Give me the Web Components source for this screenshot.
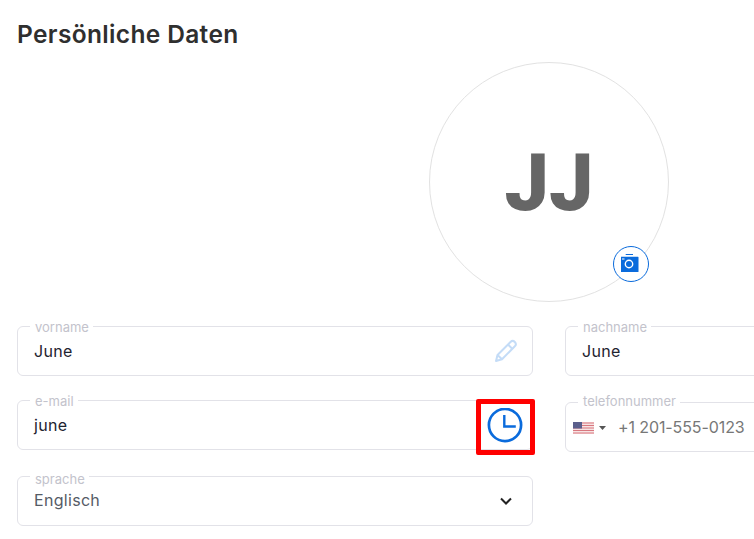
<!DOCTYPE html>
<html lang="de">
<head>
<meta charset="utf-8">
<title>Persönliche Daten</title>
<style>
html, body { margin: 0; height: 100%; overflow: hidden; background: #fff; }
body { font-family: Inter, "Liberation Sans", sans-serif; }
</style>
</head>
<body>
<profile-page>
  <user-avatar slot="avatar" initials="JJ"></user-avatar>
  <form-field label="vorname" value="June" style="grid-area: a">
    <svg slot="end" style="margin:-2px -2px 0 0" width="24" height="24" viewBox="0 0 24 24" fill="none" stroke="#c4dcf7" stroke-width="2" stroke-linejoin="round"><path d="M2 22l1.5-6L16.500 3a2.900 2.900 0 0 1 4.300 4.300L8 20.300z"/><path d="M14 5.500l4.500 4.500M3.500 16L8 20.300"/></svg>
  </form-field>
  <form-field label="nachname" value="June" style="grid-area: b"></form-field>
  <form-field label="e-mail" value="june" style="grid-area: c">
    <marked-icon slot="end"></marked-icon>
  </form-field>
  <form-field label="telefonnummer" value="+1 201-555-0123" tone="muted" style="grid-area: d; align-self: end; --label-shift: -2px; --value-spacing: -.1px">
    <us-flag slot="start"></us-flag>
  </form-field>
  <form-field label="sprache" value="Englisch" tone="grey" style="grid-area: e; --label-shift: 2px; --value-shift: -2px">
    <svg slot="end" style="margin:-2px 3px 0 0" width="14" height="10" viewBox="0 0 14 10" fill="none" stroke="#222" stroke-width="2"><path d="M2 2.500l5 5 5-5"/></svg>
  </form-field>
</profile-page>
<script>
class ProfilePage extends HTMLElement {
  connectedCallback() {
    var shadow = this.attachShadow({mode: 'open'})
    shadow.innerHTML = `<style>
:host { display: block; width: 1064px; padding: 19px 0 0 17px; }
h1 { margin: 0; font: 600 24.500px/30px Inter, "Liberation Sans", sans-serif; letter-spacing: .35px; color: #2f2f2f; }
#top { display: flex; justify-content: center; margin-top: 13px; }
#grid {
  display: grid;
  grid-template-columns: 516px 516px;
  grid-template-rows: 50px 52px 50px;
  grid-template-areas: "a b" "c d" "e .";
  column-gap: 32px;
  row-gap: 24px;
  margin-top: 24px;
}
</style>
<h1>Persönliche Daten</h1>
<div id="top"><slot name="avatar"></slot></div>
<div id="grid"><slot></slot></div>`
  }
}
customElements.define('profile-page', ProfilePage)

class UserAvatar extends HTMLElement {
  connectedCallback() {
    var shadow = this.attachShadow({mode: 'open'})
    shadow.innerHTML = `<style>
:host { display: block; position: relative; width: 240px; height: 240px; }
#circle {
  box-sizing: border-box;
  width: 100%;
  height: 100%;
  padding-top: 3px;
  border: 1px solid #e2e2e2;
  border-radius: 50%;
  display: flex;
  align-items: center;
  justify-content: center;
  font: 900 79px/1 Roboto, "Liberation Sans", sans-serif;
  color: #666;
}
#cam {
  position: absolute;
  left: 184px;
  top: 184px;
  box-sizing: border-box;
  width: 36px;
  height: 36px;
  border: 1px solid #0a6bdc;
  border-radius: 50%;
  background: #fff;
  display: flex;
  align-items: center;
  justify-content: center;
}
</style>
<div id="circle">${this.getAttribute('initials')}</div>
<div id="cam"><svg width="20" height="20" viewBox="1.500 1 20 20"><path fill="#0a6bdc" d="M6.200 .500h7.300V2H6.200zM1.500 3.700h17a.5.5 0 0 1 .5.500V18.500a.5.5 0 0 1-.5.500h-17a.5.5 0 0 1-.5-.500V4.200a.5.5 0 0 1 .5-.500z"/><circle cx="9.500" cy="11" r="3.700" fill="none" stroke="#fff" stroke-width="1.400"/><path stroke="#fff" d="M2.500 6h2.500"/></svg></div>`
  }
}
customElements.define('user-avatar', UserAvatar)

class FormField extends HTMLElement {
  connectedCallback() {
    var shadow = this.attachShadow({mode: 'open'})
    var colors = {muted: '#777', grey: '#555b66'}
    var color = colors[this.getAttribute('tone')] || '#1f2430'
    shadow.innerHTML = `<style>
:host { display: block; height: 50px; }
fieldset {
  box-sizing: border-box;
  height: 50px;
  margin: 0;
  padding: 0 16px 0 16px;
  border: 1px solid #e2e2e8;
  border-radius: 6px;
  display: flex;
  align-items: center;
  min-width: 0;
}
legend {
  padding: 0 4px 0 5px;
  margin-left: -4px;
  font: 400 13px/1 Inter, "Liberation Sans", sans-serif;
  color: #c3c3cc;
  height: 0;
  line-height: 0;
}
legend span { display: inline-block; transform: translateY(var(--label-shift, 0)); }
#row { display: flex; align-items: center; width: 100%; height: 48px; padding-top: 2px; box-sizing: border-box; }
#value { flex: 1; font: 400 16px/1 Inter, "Liberation Sans", sans-serif; letter-spacing: var(--value-spacing, .3px); color: ${color}; transform: translateY(var(--value-shift, -1px)); }
</style>
<fieldset>
<legend><span>${this.getAttribute('label')}</span></legend>
<div id="row">
<slot name="start"></slot>
<div id="value">${this.getAttribute('value')}</div>
<slot name="end"></slot>
</div>
</fieldset>`
  }
}
customElements.define('form-field', FormField)

class MarkedIcon extends HTMLElement {
  connectedCallback() {
    var shadow = this.attachShadow({mode: 'open'})
    shadow.innerHTML = `<style>
:host { display: block; position: relative; width: 36px; height: 36px; margin-right: -7px; }
svg { display: block; }
#mark {
  position: absolute;
  left: -11px;
  top: -9px;
  box-sizing: border-box;
  width: 59px;
  height: 56px;
  border: 5px solid #f00;
  border-radius: 2px;
}
</style>
<svg width="36" height="36" viewBox="0 1 36 36" fill="none" stroke="#0a6bdc" stroke-width="2.700"><circle cx="18" cy="18" r="16.100"/><path stroke-width="2.400" d="M17.300 8v11.500h11.500"/></svg>
<div id="mark"></div>`
  }
}
customElements.define('marked-icon', MarkedIcon)

class UsFlag extends HTMLElement {
  connectedCallback() {
    var shadow = this.attachShadow({mode: 'open'})
    shadow.innerHTML = `<style>
:host { display: flex; align-items: center; gap: 5px; margin: -1px 12px 0 -9px; }
</style>
<svg width="21" height="12" viewBox="0 0 21 12"><rect width="21" height="12" fill="#f6e3e3"/><path stroke="#d9777f" stroke-width="1" d="M0 1h21M0 3.500h21M0 6h21M0 8.500h21M0 11h21"/><rect width="9" height="6.500" fill="#5b5f8c"/></svg>
<svg width="7" height="4" viewBox="0 0 7 4"><path fill="#555" d="M0 0h7L3.500 4z"/></svg>`
  }
}
customElements.define('us-flag', UsFlag)
</script>
</body>
</html>
